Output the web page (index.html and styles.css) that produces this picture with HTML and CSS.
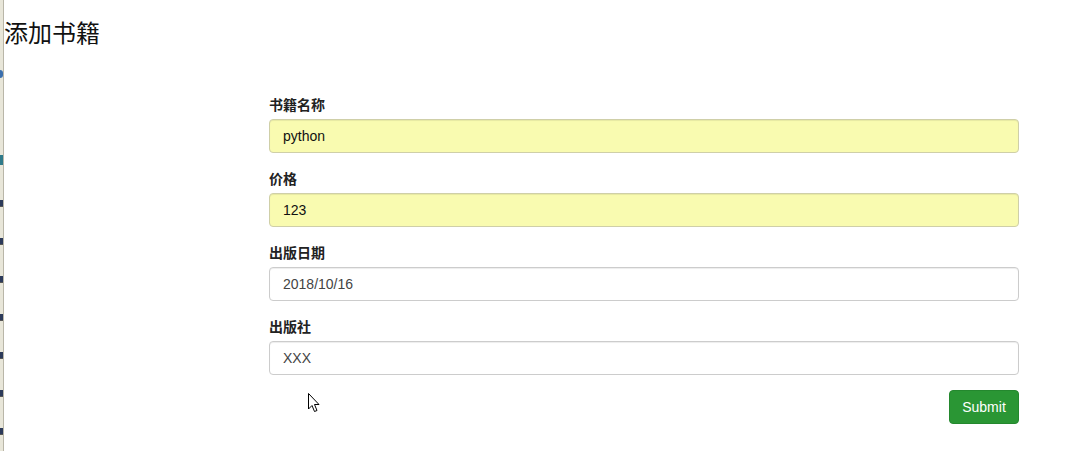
FILE: index.html
```html
<!DOCTYPE html>
<html lang="zh">
<head>
<meta charset="utf-8">
<title>添加书籍</title>
<link rel="stylesheet" href="styles.css">
</head>
<body>
<div class="page">
  <div class="edge">
    <span class="mark m-blue m1"></span>
    <span class="mark m-teal m2"></span>
    <span class="mark m3"></span>
    <span class="mark"></span>
    <span class="mark"></span>
    <span class="mark"></span>
    <span class="mark"></span>
    <span class="mark"></span>
    <span class="mark"></span>
  </div>
  <main class="main">
    <h3 class="title">添加书籍</h3>
    <form class="form">
      <div class="group">
        <label class="label">书籍名称</label>
        <input class="input filled" type="text" value="python">
      </div>
      <div class="group">
        <label class="label">价格</label>
        <input class="input filled" type="text" value="123">
      </div>
      <div class="group">
        <label class="label">出版日期</label>
        <input class="input" type="text" value="2018/10/16">
      </div>
      <div class="group">
        <label class="label">出版社</label>
        <input class="input" type="text" value="XXX">
      </div>
      <div class="actions">
        <button class="btn" type="button">Submit</button>
      </div>
    </form>
  </main>
</div>
<svg class="cursor" width="12" height="20" viewBox="0 0 12 20">
  <path d="M0.5 0.5 L0.5 16 L4 12.5 L6.5 18.5 L9 17.5 L6.5 11.5 L11 11.5 Z" fill="#fff" stroke="#000" stroke-width="1" stroke-linejoin="miter"/>
</svg>
</body>
</html>
```
FILE: styles.css
```css
html, body {
  margin: 0;
  padding: 0;
  background: #fff;
}
body {
  font-family: "Liberation Sans", Arial, "Noto Sans CJK SC", sans-serif;
  font-size: 14px;
  color: #333;
  position: relative;
  width: 1089px;
  height: 451px;
  overflow: hidden;
}
.page {
  display: flex;
  height: 451px;
}
.edge {
  width: 3px;
  flex: 0 0 3px;
  background: #e8e6d9;
  border-right: 1px solid #b9b6a8;
  display: flex;
  flex-direction: column;
  padding-top: 200px;
  gap: 31px;
  position: relative;
}
.mark {
  display: block;
  width: 3px;
  height: 6px;
  background: #2c3a5a;
  border-bottom: 1px solid #555;
}
.m1 {
  position: absolute;
  top: 70px;
  left: 0;
  height: 8px;
  background: #3b6fae;
  border: none;
  border-radius: 0 4px 4px 0;
}
.m2 {
  position: absolute;
  top: 155px;
  left: 0;
  height: 10px;
  background: #2f7a8a;
  border: none;
}
.main {
  flex: 1;
  display: flex;
  flex-direction: column;
}
.title {
  margin: 17px 0 0 0;
  font-family: "Noto Sans CJK SC", sans-serif;
  font-weight: 400;
  font-size: 24px;
  line-height: 30px;
  color: #111;
}
.form {
  margin: 47px 0 0 265px;
  width: 750px;
  display: flex;
  flex-direction: column;
}
.group {
  display: flex;
  flex-direction: column;
  margin-bottom: 15px;
}
.label {
  font-family: "Noto Sans CJK SC", sans-serif;
  font-weight: 700;
  font-size: 14px;
  line-height: 20px;
  margin-bottom: 5px;
  color: #222;
}
.input {
  box-sizing: border-box;
  height: 34px;
  width: 100%;
  padding: 6px 12px 6px 13px;
  font-family: "Liberation Sans", Arial, sans-serif;
  font-size: 14px;
  color: #444;
  background: #fff;
  border: 1px solid #ccc;
  border-radius: 4px;
  box-shadow: inset 0 1px 1px rgba(0,0,0,.075);
  outline: none;
}
.input.filled {
  background: #f9fbb0;
  color: #111;
  border-color: #cfcfa8;
}
.actions {
  display: flex;
  justify-content: flex-end;
}
.btn {
  box-sizing: border-box;
  width: 70px;
  height: 34px;
  border: 1px solid #24882e;
  border-radius: 4px;
  background: #2a9634;
  color: #fff;
  font-family: "Liberation Sans", Arial, sans-serif;
  font-size: 14px;
  padding: 0;
}
.cursor {
  position: absolute;
  left: 308px;
  top: 393px;
}
```
